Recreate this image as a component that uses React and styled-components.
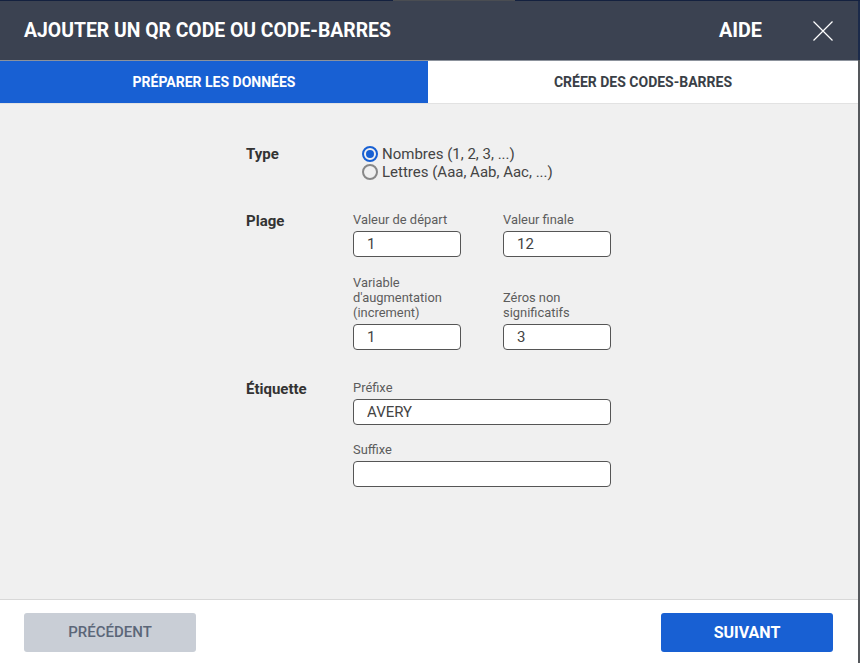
import React from "react";
import styled, { createGlobalStyle } from "styled-components";

const Global = createGlobalStyle`
  * { box-sizing: border-box; }
  html, body { margin: 0; height: 100%; }
  body {
    font-family: Roboto, "Liberation Sans", sans-serif;
    background: linear-gradient(#1b2a4a 60px, #55585c 60px);
    overflow: hidden;
  }
`;

const TopStrip = styled.div`
  height: 1px;
  background: linear-gradient(
    90deg,
    #14213f 393px,
    #4a4d52 393px,
    #4a4d52 515px,
    #14213f 515px
  );
`;

const Modal = styled.div`
  width: 858px;
  height: 662px;
  display: flex;
  flex-direction: column;
  background: #fff;
`;

const Header = styled.header`
  height: 59px;
  flex: none;
  display: flex;
  align-items: center;
  padding: 0 24px;
  background: #3b4251;
  color: #fff;
`;

const Title = styled.h1`
  margin: 0;
  flex: 1;
  font-size: 19.35px;
  font-weight: 700;
`;

const Help = styled.span`
  font-size: 19.8px;
  font-weight: 700;
  margin-right: 51px;
`;

const CloseButton = styled.button`
  width: 20px;
  height: 20px;
  padding: 0;
  margin-right: 1px;
  border: none;
  background: none;
  color: #fff;
  display: flex;
`;

const Tabs = styled.nav`
  height: 43px;
  flex: none;
  display: grid;
  grid-template-columns: 428px 1fr;
  border-top: 1px solid #8c929c;
`;

const Tab = styled.div`
  display: flex;
  align-items: center;
  justify-content: center;
  font-size: 14px;
  font-weight: 700;
  background: ${(p) => (p.$active ? "#1860d3" : "#fff")};
  color: ${(p) => (p.$active ? "#fff" : "#3a3f47")};
`;

const Body = styled.main`
  flex: 1;
  background: #f0f0f0;
  padding: 40px 0 0 246px;
  border-top: 1px solid #e2e2e2;
`;

const Section = styled.section`
  display: grid;
  grid-template-columns: 107px 258px;
  margin-bottom: ${(p) => p.$gap || 0}px;
`;

const Heading = styled.div`
  font-size: 15px;
  font-weight: 700;
  line-height: 20px;
  color: #333;
`;

const Radios = styled.div`
  display: flex;
  flex-direction: column;
  padding: 1px 0 0 9px;
`;

const RadioRow = styled.label`
  display: flex;
  align-items: center;
  height: 18px;
  gap: 4px;
  font-size: 15px;
  color: #444;
`;

const RadioMark = styled.span`
  width: 16px;
  height: 16px;
  border-radius: 50%;
  border: 2px solid ${(p) => (p.$checked ? "#1860d3" : "#888")};
  display: flex;
  align-items: center;
  justify-content: center;
  &::after {
    content: "";
    display: ${(p) => (p.$checked ? "block" : "none")};
    width: 8px;
    height: 8px;
    border-radius: 50%;
    background: #1860d3;
  }
`;

const Fields = styled.div`
  display: grid;
  grid-template-columns: ${(p) => (p.$wide ? "258px" : "107.5px 108px")};
  column-gap: 42.5px;
  row-gap: ${(p) => p.$rowGap}px;
  align-items: end;
  padding-top: 1px;
`;

const Field = styled.label`
  display: flex;
  flex-direction: column;
  gap: 4px;
`;

const FieldLabel = styled.span`
  font-size: 12.9px;
  line-height: 15px;
  color: #5c5c5c;
`;

const Input = styled.input`
  width: 100%;
  height: 26px;
  padding: 0 13px;
  border: 1px solid #555;
  border-radius: 4px;
  background: #fff;
  font-family: inherit;
  font-size: 15px;
  color: #444;
  outline: none;
`;

const Footer = styled.footer`
  height: 64px;
  flex: none;
  display: flex;
  align-items: center;
  justify-content: space-between;
  padding: 1px 25px 0 24px;
  border-top: 1px solid #d8d8d8;
  background: #fff;
`;

const FooterButton = styled.button`
  width: 172px;
  height: 39px;
  border: none;
  border-radius: 3px;
  font-family: inherit;
  font-size: ${(p) => (p.$primary ? 16 : 15)}px;
  font-weight: ${(p) => (p.$primary ? 700 : 500)};
  background: ${(p) => (p.$primary ? "#1860d3" : "#c9ced6")};
  color: ${(p) => (p.$primary ? "#fff" : "#5b6678")};
`;

export default function App() {
  return (
    <>
      <Global />
      <TopStrip />
      <Modal>
        <Header>
          <Title>AJOUTER UN QR CODE OU CODE-BARRES</Title>
          <Help>AIDE</Help>
          <CloseButton aria-label="Fermer">
            <svg width="20" height="20" viewBox="0 0 20 20" stroke="currentColor" strokeWidth="1.2">
              <path d="M0.5 0.5 19.5 19.5M19.5 0.5 0.5 19.5" />
            </svg>
          </CloseButton>
        </Header>
        <Tabs>
          <Tab $active>PRÉPARER LES DONNÉES</Tab>
          <Tab>CRÉER DES CODES-BARRES</Tab>
        </Tabs>
        <Body>
          <Section $gap={30}>
            <Heading>Type</Heading>
            <Radios>
              <RadioRow>
                <RadioMark $checked />
                Nombres (1, 2, 3, ...)
              </RadioRow>
              <RadioRow>
                <RadioMark />
                Lettres (Aaa, Aab, Aac, ...)
              </RadioRow>
            </Radios>
          </Section>
          <Section $gap={29}>
            <Heading>Plage</Heading>
            <Fields $rowGap={18}>
              <Field>
                <FieldLabel>Valeur de départ</FieldLabel>
                <Input defaultValue="1" />
              </Field>
              <Field>
                <FieldLabel>Valeur finale</FieldLabel>
                <Input defaultValue="12" />
              </Field>
              <Field>
                <FieldLabel>Variable d'augmentation (increment)</FieldLabel>
                <Input defaultValue="1" />
              </Field>
              <Field>
                <FieldLabel>Zéros non significatifs</FieldLabel>
                <Input defaultValue="3" />
              </Field>
            </Fields>
          </Section>
          <Section>
            <Heading>Étiquette</Heading>
            <Fields $wide $rowGap={17}>
              <Field>
                <FieldLabel>Préfixe</FieldLabel>
                <Input defaultValue="AVERY" />
              </Field>
              <Field>
                <FieldLabel>Suffixe</FieldLabel>
                <Input />
              </Field>
            </Fields>
          </Section>
        </Body>
        <Footer>
          <FooterButton>PRÉCÉDENT</FooterButton>
          <FooterButton $primary>SUIVANT</FooterButton>
        </Footer>
      </Modal>
    </>
  );
}
